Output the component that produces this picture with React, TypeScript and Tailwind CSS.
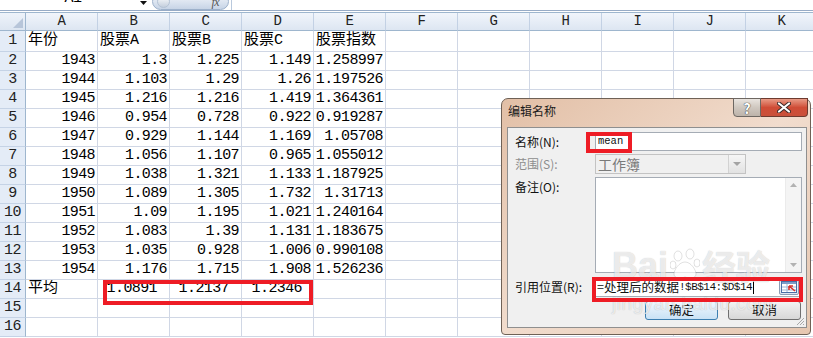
import React from "react";

const COLS = ["A", "B", "C", "D", "E", "F", "G", "H", "I", "J", "K"];

const data = [
    ["1943", "1.3", "1.225", "1.149", "1.258997"],
    ["1944", "1.103", "1.29", "1.26", "1.197526"],
    ["1945", "1.216", "1.216", "1.419", "1.364361"],
    ["1946", "0.954", "0.728", "0.922", "0.919287"],
    ["1947", "0.929", "1.144", "1.169", "1.05708"],
    ["1948", "1.056", "1.107", "0.965", "1.055012"],
    ["1949", "1.038", "1.321", "1.133", "1.187925"],
    ["1950", "1.089", "1.305", "1.732", "1.31713"],
    ["1951", "1.09", "1.195", "1.021", "1.240164"],
    ["1952", "1.083", "1.39", "1.131", "1.183675"],
    ["1953", "1.035", "0.928", "1.006", "0.990108"],
    ["1954", "1.176", "1.715", "1.908", "1.526236"],
];

const cellFont = "font-['Liberation_Mono','Noto_Sans_CJK_SC',monospace] text-[15px] tracking-[-0.6px] text-black";
const uiFont = "font-['Noto_Sans_CJK_SC','Liberation_Sans',sans-serif]";

function RowHead({ n, h }: { n: number; h: string }) {
    return (
        <div className={`w-[26px] shrink-0 ${h} flex items-center justify-center bg-[#e4ecf7] border-r border-b border-r-[#9eb6ce] border-b-[#c5d3e6] text-[#222]`}>
            {n}
        </div>
    );
}

function Cell({ children, align = "right", h = "h-[19px]", extra = "" }: { children?: React.ReactNode; align?: "left" | "right"; h?: string; extra?: string }) {
    return (
        <div
            className={`w-[72px] shrink-0 ${h} border-r border-b border-[#d0d7e5] flex items-center overflow-hidden whitespace-nowrap ${
                align === "right" ? "justify-end pr-[2px]" : "justify-start pl-[2px]"
            } ${extra}`}
        >
            {children}
        </div>
    );
}

function Sheet() {
    return (
        <div className={`w-[813px] h-[338px] overflow-hidden bg-white ${cellFont}`}>
            {/* formula bar (mostly scrolled off) */}
            <div className="h-[10px] flex overflow-hidden">
                <div className="w-[140px] shrink-0 flex justify-center">
                    <span className="-mt-[9px] leading-[16px] pl-[6px]">A1</span>
                </div>
                <div className="w-[12px] shrink-0 flex justify-start pt-[1px]">
                    <svg width="8" height="5" viewBox="0 0 8 5">
                        <path d="M0 0h7L3.5 4z" fill="#111" />
                    </svg>
                </div>
                <div className="w-[77px] shrink-0 h-[17px] -mt-[7px] rounded-full border border-[#9db1cb] bg-gradient-to-b from-[#f4f7fb] to-[#c7d4e6] flex items-center justify-between px-[4px]">
                    <div className="w-[13px] h-[13px] rounded-full bg-gradient-to-b from-[#ffffff] to-[#c4cfdd] border border-[#b4c2d4]" />
                    <span className="italic text-[12px] text-[#555] pr-[5px] font-['Liberation_Serif',serif]">fx</span>
                </div>
                <div className="flex-1 border-l border-[#b9c9dd] ml-[2px]" />
            </div>
            <div className="h-[2px] border-t border-[#97abc6]" />

            {/* column headers */}
            <div className="flex border-t border-[#9eb6ce]">
                <div className="w-[26px] shrink-0 h-[18px] bg-gradient-to-b from-[#eef3fa] to-[#dce5f1] border-r border-b border-[#9eb6ce] relative">
                    <svg className="absolute right-[2px] bottom-[2px]" width="10" height="10" viewBox="0 0 10 10">
                        <path d="M10 0V10H0z" fill="#b7c5d9" />
                    </svg>
                </div>
                {COLS.map((c) => (
                    <div
                        key={c}
                        className="w-[72px] shrink-0 h-[18px] bg-gradient-to-b from-[#f1f5fb] to-[#dde6f2] border-r border-b border-r-[#c3d1e4] border-b-[#9eb6ce] flex items-center justify-center text-[#222] text-[14px]"
                    >
                        {c}
                    </div>
                ))}
            </div>

            {/* row 1 */}
            <div className="flex">
                <RowHead n={1} h="h-[21px]" />
                {["年份", "股票A", "股票B", "股票C", "股票指数", "", "", "", "", "", ""].map((t, i) => (
                    <Cell key={i} align="left" h="h-[21px]" extra="text-[15px] tracking-normal pl-[1px]">
                        {t}
                    </Cell>
                ))}
            </div>

            {/* data rows */}
            {data.map((r, ri) => (
                <div key={ri} className="flex">
                    <RowHead n={ri + 2} h="h-[19px]" />
                    {r.map((v, i) => (
                        <Cell key={i}>{v}</Cell>
                    ))}
                    {Array.from({ length: 6 }).map((_, i) => (
                        <Cell key={"e" + i} />
                    ))}
                </div>
            ))}

            {/* row 14 */}
            <div className="flex">
                <RowHead n={14} h="h-[19px]" />
                <Cell align="left" extra="text-[15px] tracking-normal">平均</Cell>
                <Cell extra="pr-[12px]">1.0891</Cell>
                <Cell extra="pr-[12px]">1.2137</Cell>
                <Cell extra="pr-[11px]">1.2346</Cell>
                {Array.from({ length: 7 }).map((_, i) => (
                    <Cell key={i} />
                ))}
            </div>

            {[15, 16].map((n) => (
                <div key={n} className="flex">
                    <RowHead n={n} h="h-[19px]" />
                    {COLS.map((c) => (
                        <Cell key={c} />
                    ))}
                </div>
            ))}
        </div>
    );
}

function RangeIcon() {
    return (
        <svg width="16" height="12" viewBox="0 0 16 12">
            <rect x="0.5" y="0.5" width="15" height="11" fill="#fff" stroke="#4a6fa5" />
            <rect x="1" y="1" width="14" height="2" fill="#7d9cc8" />
            <path d="M1 6h14M1 9h14M6 3v8" stroke="#9fb4d3" strokeWidth="1" />
            <path d="M8 5l6 5M8 5v4M8 5h4" stroke="#d8322a" strokeWidth="1.6" fill="none" />
        </svg>
    );
}

function Dialog() {
    return (
        <div className={`absolute left-[501px] top-[98px] w-[310px] h-[237px] rounded-t-[7px] rounded-b-[4px] border border-[#6f6156] bg-gradient-to-br from-[#e2bfa6] via-[#f1dccd] to-[#e6c7b1] flex flex-col ${uiFont}`}>
            {/* title bar */}
            <div className="h-[28px] flex justify-between items-start">
                <span className="pl-[6px] pt-[3px] text-[12px] text-[#1b1b1b]">编辑名称</span>
                <div className="flex mr-[2px] -mt-px">
                    <div className="w-[28px] h-[19px] rounded-bl-[4px] border border-[#6d6762] bg-gradient-to-b from-[#e9e4df] via-[#cfc7bf] to-[#bdb3aa] flex items-center justify-center">
                        <span className="text-[14px] font-bold text-white leading-none [text-shadow:0_0_1px_#333,0_0_1px_#333]">?</span>
                    </div>
                    <div className="w-[47px] h-[19px] rounded-br-[4px] border border-l-0 border-[#6d3a2f] bg-gradient-to-b from-[#e79a86] via-[#cf4c36] to-[#c9503a] flex items-center justify-center">
                        <svg width="14" height="11" viewBox="0 0 14 11">
                            <path d="M2 1.5l10 8M12 1.5l-10 8" stroke="#3a2a28" strokeWidth="4" strokeLinecap="round" />
                            <path d="M2 1.5l10 8M12 1.5l-10 8" stroke="#fff" strokeWidth="2.2" strokeLinecap="round" />
                        </svg>
                    </div>
                </div>
            </div>

            {/* client area */}
            <div className="ml-[5px] w-[300px] h-[201px] border border-[#8f8f8f] bg-[#f0f0f0] flex flex-col pt-[4px] relative text-[12px] text-[#111]">
                <div className="flex items-center h-[19px]">
                    <span className="w-[87px] pl-[7px]">名称(N):</span>
                    <div className="w-[207px] h-[19px] border border-[#a5acb5] bg-white flex items-center pl-[2px]">
                        <span className="font-['Liberation_Mono',monospace] text-[10.5px]">mean</span>
                    </div>
                </div>
                <div className="flex items-center h-[20px] mt-[3px]">
                    <span className="w-[87px] pl-[7px] text-[#8d8d8d]">范围(S):</span>
                    <div className="w-[151px] h-[20px] border border-[#c3c3c3] bg-[#f0f0f0] flex items-center justify-between">
                        <span className="pl-[2px] text-[14px] text-[#7a7a7a]">工作簿</span>
                        <div className="w-[17px] h-[18px] border-l border-[#d2d2d2] bg-gradient-to-b from-[#f6f6f6] to-[#e2e2e2] flex items-center justify-center">
                            <svg width="8" height="4" viewBox="0 0 8 4">
                                <path d="M0 0h8L4 4z" fill="#a3a3a3" />
                            </svg>
                        </div>
                    </div>
                </div>
                <div className="flex items-start h-[96px] mt-[3px]">
                    <span className="w-[87px] pl-[7px] pt-[1px]">备注(O):</span>
                    <div className="w-[207px] h-[96px] border border-[#a5acb5] bg-white flex justify-end">
                        <div className="w-[16px] h-full bg-[#f4f4f4] border-l border-[#ebebeb] flex flex-col justify-between items-center py-[5px]">
                            <svg width="7" height="4" viewBox="0 0 7 4">
                                <path d="M0 4h7L3.5 0z" fill="#b2b2b2" />
                            </svg>
                            <svg width="7" height="4" viewBox="0 0 7 4">
                                <path d="M0 0h7L3.5 4z" fill="#b2b2b2" />
                            </svg>
                        </div>
                    </div>
                </div>
                <div className="flex items-center h-[20px] mt-[4px]">
                    <span className="w-[87px] pl-[7px]">引用位置(R):</span>
                    <div className="w-[207px] h-[20px] border border-[#a5acb5] bg-white flex items-center justify-between pl-[1px] pr-[2px]">
                        <span className="flex items-center whitespace-nowrap text-[12.5px]">
                            =处理后的数据
                            <span className="font-['Liberation_Mono',monospace] text-[11px] tracking-[-0.5px]">!$B$14:$D$14</span>
                            <span className="w-px h-[13px] bg-black ml-[1px]" />
                        </span>
                        <div className="w-[20px] h-[15px] border border-[#8c9cb4] rounded-[2px] bg-gradient-to-b from-[#f7f9fc] to-[#dce4ef] flex items-center justify-center">
                            <RangeIcon />
                        </div>
                    </div>
                </div>
                <div className="flex justify-end gap-[10px] pr-[5px] mt-[4px]">
                    <button className="w-[73px] h-[19px] rounded-[3px] border border-[#3c7fb1] bg-gradient-to-b from-[#f2f8fd] to-[#c9e2f5] text-[12.5px] leading-none">
                        确定
                    </button>
                    <button className="w-[73px] h-[19px] rounded-[3px] border border-[#707070] bg-gradient-to-b from-[#f2f2f2] to-[#d8d8d8] text-[12.5px] leading-none">
                        取消
                    </button>
                </div>
                <svg className="absolute right-[1px] bottom-[1px]" width="10" height="10" viewBox="0 0 10 10">
                    <path d="M9 2L2 9M9 5L5 9M9 8L8 9" stroke="#a8a8a8" strokeWidth="1" />
                </svg>
            </div>
        </div>
    );
}

function Watermark() {
    return (
        <div className="absolute left-[612px] top-[248px] pointer-events-none select-none flex flex-col items-start font-['Liberation_Sans',sans-serif] text-white/70 [text-shadow:0_0_1px_rgba(0,0,0,0.25)]">
            <div className="flex items-center gap-[2px] text-[36px] font-bold leading-none">
                <span>Bai</span>
                <svg width="30" height="32" viewBox="0 0 30 32" className="-mt-[4px]">
                    <g fill="rgba(255,255,255,0.7)" stroke="rgba(0,0,0,0.12)">
                        <ellipse cx="8" cy="8" rx="4" ry="5" />
                        <ellipse cx="20" cy="6" rx="4" ry="5" />
                        <ellipse cx="3" cy="17" rx="3" ry="4" />
                        <ellipse cx="27" cy="15" rx="3" ry="4" />
                        <path d="M15 14c-6 0-11 8-11 12 0 4 5 5 11 3 6 2 11 1 11-3 0-4-5-12-11-12z" />
                    </g>
                </svg>
                <span className="font-['Noto_Sans_CJK_SC',sans-serif] text-[34px]">经验</span>
            </div>
            <span className="text-[19px] mt-[6px] tracking-[0.5px]">jingyan.baidu.com</span>
        </div>
    );
}

export default function App() {
    return (
        <div className="relative w-[813px] h-[338px] overflow-hidden bg-white">
            <Sheet />
            <Dialog />
            <Watermark />

            {/* red highlight boxes */}
            <div className="absolute left-[103px] top-[280px] w-[210px] h-[25px] border-4 border-[#ee1c25]" />
            <div className="absolute left-[586px] top-[132px] w-[46px] h-[21px] border-4 border-[#ee1c25]" />
            <div className="absolute left-[592px] top-[277px] w-[211px] h-[25px] border-4 border-[#ee1c25]" />
        </div>
    );
}
